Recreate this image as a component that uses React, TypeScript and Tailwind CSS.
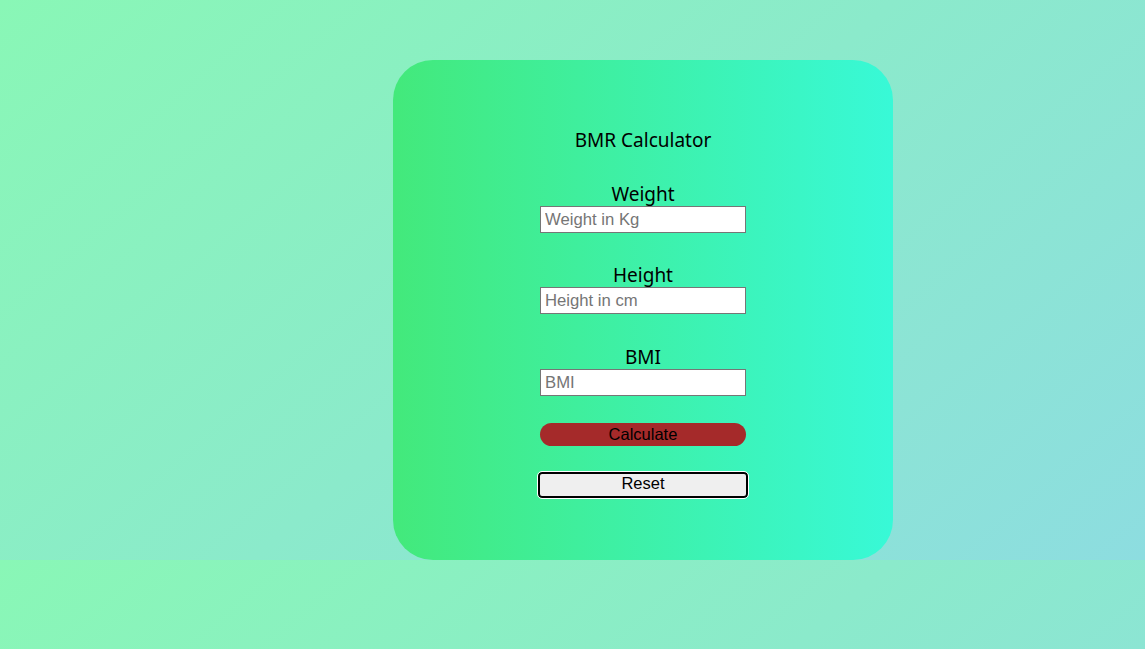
import { FC } from "react";

const Field: FC<{ label: string; placeholder: string; className?: string }> = ({ label, placeholder, className }) => {
  return (
    <div className={`flex flex-col items-center ${className ?? ""}`}>
      <label className="h-[25px] pt-[1px] text-[19px] leading-[25px] text-black">{label}</label>
      <input
        type="text"
        placeholder={placeholder}
        className="h-[27px] w-[206px] border border-[#767676] bg-white px-[4px] font-['Liberation_Sans',Arial,sans-serif] text-[16.7px] text-black outline-none placeholder:text-[#757575]"
      />
    </div>
  );
};

const App: FC = () => {
  return (
    <div className="h-[649px] w-full overflow-hidden bg-[linear-gradient(139deg,#89f7b6_0%,#8ddde0_100%)] bg-[length:100%_560px] bg-repeat-y font-['Noto_Sans',sans-serif]">
      <div className="pl-[393px] pt-[60px]">
        <div className="flex h-[500px] w-[500px] flex-col items-center rounded-[40px] bg-[linear-gradient(to_right,#43e97b_0%,#38f9d7_100%)] pt-[66px]">
          <h1 className="h-[28px] text-[19px] leading-[28px] text-black">BMR Calculator</h1>
          <Field label="Weight" placeholder="Weight in Kg" className="mt-[27px]" />
          <Field label="Height" placeholder="Height in cm" className="mt-[29px]" />
          <Field label="BMI" placeholder="BMI" className="mt-[30px]" />
          <button className="mt-[27px] h-[23px] w-[206px] rounded-full bg-[#a52a2a] font-['Liberation_Sans',Arial,sans-serif] text-[16.5px] leading-[23px] text-black">
            Calculate
          </button>
          <button className="mt-[26px] h-[26px] w-[210px] rounded-[4px] border-2 border-black bg-[#efefef] pb-[3px] font-['Liberation_Sans',Arial,sans-serif] text-[16.5px] leading-[19px] text-black outline outline-1 outline-white">
            Reset
          </button>
        </div>
      </div>
    </div>
  );
};

export default App;
